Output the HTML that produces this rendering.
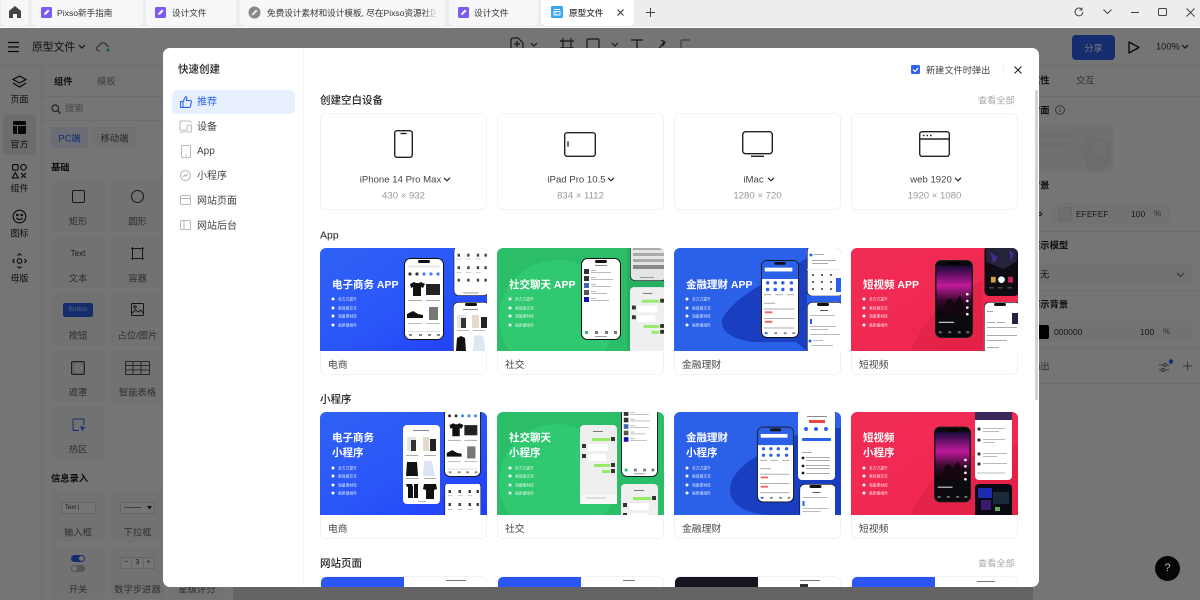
<!DOCTYPE html>
<html lang="zh-CN"><head><meta charset="utf-8"><title>原型文件</title>
<style>
*{box-sizing:border-box}
html,body{margin:0;padding:0;width:1200px;height:600px;overflow:hidden;background:#fff;font-family:"Liberation Sans","Noto Sans CJK SC",sans-serif;color:#222}
body{position:relative;filter:blur(.3px)}
.a{position:absolute}
.t{position:absolute;transform:translateY(calc(-50% + 1px));white-space:nowrap;line-height:1.2}
.c{position:absolute;transform:translate(-50%,calc(-50% + 1px));white-space:nowrap;line-height:1.2;text-align:center}
.l{transform:translate(-50%,-50%)}
.b{font-weight:700}
svg{display:block;overflow:visible}
.tab{position:absolute;top:0;height:26px;background:#f6f7f8;border-radius:0 0 5px 5px}
.tile{position:absolute;width:54px;height:52px;background:#f9f9fb;border-radius:5px}
.lb{font-size:9.3px;color:#666}
.card{position:absolute;width:167px;background:#fff;border:1px solid #f1f2f4;border-radius:6px}
.th{position:absolute;width:167px;height:103px;border-radius:6px 6px 0 0;overflow:hidden}
.hr{position:absolute;height:1px;background:#eeeff1}
.tb{font-size:8.6px;color:#333}
.s{font-size:10px;color:#444}
.h{font-size:10.5px;font-weight:500;color:#222}
.n{font-size:9.8px;color:#444}
.d{font-size:9.6px;color:#444}
.e{font-size:9.6px;color:#999}
</style></head><body>
<svg width="0" height="0" style="position:absolute">
<defs>
<linearGradient id="gb" x1="0" y1="0" x2="1" y2="1"><stop offset="0" stop-color="#2f62f5"/><stop offset=".55" stop-color="#2a55f8"/><stop offset="1" stop-color="#1f3cfa"/></linearGradient>
<linearGradient id="gr" x1="0" y1="0" x2="1" y2="1"><stop offset="0" stop-color="#f02c55"/><stop offset="1" stop-color="#f0264c"/></linearGradient>
<linearGradient id="gv" x1="0" y1="0" x2="0" y2="1"><stop offset="0" stop-color="#1a0a3a"/><stop offset=".4" stop-color="#c01a9a"/><stop offset=".7" stop-color="#3a0a30"/><stop offset="1" stop-color="#050505"/></linearGradient>
<symbol id="ecom" viewBox="0 0 40 82"><rect x=".5" y=".5" width="39" height="81" rx="6" fill="#fff" stroke="#111"/><rect x="14" y="2" width="12" height="3" rx="1.500" fill="#111"/><rect x="4" y="7" width="32" height="3" fill="#eee"/><g fill="#333"><circle cx="6" cy="16" r="1.600"/><circle cx="13" cy="16" r="1.600"/></g><g fill="#3b82f6"><circle cx="20" cy="16" r="1.600"/><circle cx="27" cy="16" r="1.600"/><circle cx="34" cy="16" r="1.600"/></g><path d="M6 26l4-2 2 1 3 0 2-1 4 2-2 4-2-1v9H9v-9l-2 1z" fill="#111"/><rect x="22" y="26" width="14" height="11" fill="#222"/><rect x="4" y="42" width="14" height="1" fill="#aaa"/><rect x="22" y="42" width="14" height="1" fill="#aaa"/><path d="M3 56l6-3 5 3 5 1v3H3z" fill="#111"/><rect x="25" y="49" width="9" height="13" fill="#777"/><rect x="4" y="65" width="14" height="1" fill="#bbb"/><rect x="22" y="65" width="14" height="1" fill="#bbb"/><rect x="4" y="73" width="32" height="1" fill="#ddd"/><g fill="#888"><rect x="5" y="76" width="3" height="2"/><rect x="15" y="76" width="3" height="2"/><rect x="24" y="76" width="3" height="2"/><rect x="33" y="76" width="3" height="2"/></g></symbol>
<symbol id="grid" viewBox="0 0 36 50"><rect x=".3" y="-2" width="36" height="51.500" rx="5" fill="#fff" stroke="#111" stroke-width=".6"/><g fill="#444"><rect x="4" y="6" width="2.500" height="3"/><rect x="14" y="6" width="2.500" height="3"/><rect x="24" y="6" width="2.500" height="3"/><rect x="32" y="6" width="2.500" height="3"/><rect x="4" y="19" width="2.500" height="3"/><rect x="14" y="19" width="2.500" height="3"/><rect x="24" y="19" width="2.500" height="3"/><rect x="32" y="19" width="2.500" height="3"/><rect x="4" y="32" width="2.500" height="3"/><rect x="14" y="32" width="2.500" height="3"/><rect x="24" y="32" width="2.500" height="3"/><rect x="32" y="32" width="2.500" height="3"/></g><g fill="#ccc"><rect x="3" y="11" width="5" height="1"/><rect x="13" y="11" width="5" height="1"/><rect x="23" y="11" width="5" height="1"/><rect x="3" y="25" width="5" height="1"/><rect x="13" y="25" width="5" height="1"/><rect x="23" y="25" width="5" height="1"/></g><rect x="10" y="46" width="16" height="1.500" fill="#bbb"/></symbol>
<symbol id="shop" viewBox="0 0 36 50"><rect x=".3" y=".3" width="36" height="52" rx="5" fill="#fff" stroke="#111" stroke-width=".6"/><rect x="12" y="1" width="12" height="3" rx="1.500" fill="#111"/><rect x="10" y="7" width="15" height="1" fill="#888"/><path d="M4 13h9v13H4z" fill="#e5e5e5"/><path d="M8 16h5v10H8z" fill="#333"/><path d="M19 13h7v13h-7z" fill="#e5d8cc"/><path d="M28 15h6v11h-6z" fill="#222"/><g fill="#bbb"><rect x="4" y="28" width="12" height="1"/><rect x="20" y="28" width="12" height="1"/></g><path d="M4 36l4-2 4 2 1 13H3z" fill="#111"/><path d="M21 34l5-1 5 2 1 14H20z" fill="#dde6f2"/></symbol>
<symbol id="shop2" viewBox="0 0 37 79"><rect width="37" height="79" rx="4" fill="#fff"/><rect x="10" y="5" width="16" height="1" fill="#888"/><path d="M4 12h9v14H4z" fill="#e5e5e5"/><path d="M8 15h5v11H8z" fill="#333"/><path d="M20 12h6v14h-6z" fill="#e5d8cc"/><path d="M27 14h6v12h-6z" fill="#222"/><g fill="#aaa"><rect x="3" y="30" width="12" height="1"/><rect x="21" y="30" width="12" height="1"/></g><path d="M4 37h10l1 14H3z" fill="#111"/><path d="M21 36h8l3 15H20z" fill="#dbe4f0"/><g fill="#aaa"><rect x="3" y="53" width="12" height="1"/><rect x="21" y="53" width="12" height="1"/></g><path d="M3 59h6l1 3v11H5v-11H4zM11 59h4v14h-4z" fill="#111"/><path d="M21 59h12l1 5-3 1v9H23v-9l-3-1z" fill="#111"/><rect x="15" y="76" width="8" height="1" fill="#bbb"/></symbol>
<symbol id="list" viewBox="0 0 40 82"><rect x=".5" y=".5" width="39" height="81" rx="6" fill="#fff" stroke="#111"/><rect x="14" y="2" width="12" height="3" rx="1.500" fill="#111"/><rect x="14" y="7" width="12" height="1" fill="#888"/><g fill="#333"><rect x="3" y="11" width="5" height="5"/><rect x="3" y="18" width="5" height="5"/><rect x="3" y="25" width="5" height="5" fill="#46a"/><rect x="3" y="32" width="5" height="5" fill="#555"/><rect x="3" y="39" width="5" height="5" fill="#11a"/></g><g fill="#bbb"><rect x="10" y="12" width="5" height="1"/><rect x="10" y="14" width="20" height="1"/><rect x="10" y="19" width="5" height="1"/><rect x="10" y="21" width="22" height="1"/><rect x="10" y="26" width="5" height="1"/><rect x="10" y="28" width="20" height="1"/><rect x="10" y="33" width="5" height="1"/><rect x="10" y="35" width="16" height="1"/><rect x="10" y="40" width="5" height="1"/><rect x="10" y="42" width="18" height="1"/></g><rect x="4" y="73" width="3" height="3" fill="#2bbd68"/><g fill="#777"><rect x="14" y="73" width="3" height="3"/><rect x="24" y="73" width="3" height="3"/><rect x="33" y="73" width="3" height="3"/></g><rect x="14" y="78" width="12" height="1" fill="#999"/></symbol>
<symbol id="chat" viewBox="0 0 37 79"><rect width="37" height="79" rx="4" fill="#efefef"/><rect x="13" y="6" width="10" height="1" fill="#777"/><rect x="12" y="13" width="18" height="3" fill="#95ec69"/><rect x="31" y="12" width="4" height="4" fill="#333"/><rect x="2" y="19" width="4" height="4" fill="#333"/><rect x="8" y="19" width="20" height="7" fill="#fff"/><rect x="2" y="29" width="4" height="4" fill="#333"/><rect x="8" y="29" width="18" height="7" fill="#fff"/><rect x="14" y="39" width="16" height="3" fill="#95ec69"/><rect x="31" y="38" width="4" height="4" fill="#333"/><rect x="22" y="45" width="8" height="3" fill="#95ec69"/><rect x="31" y="44" width="4" height="4" fill="#333"/><rect y="70" width="37" height="9" fill="#f8f8f8"/><rect x="6" y="72" width="20" height="2" fill="#ddd"/></symbol>
<symbol id="kbd" viewBox="0 0 34 48"><rect x=".3" y=".3" width="36" height="47.400" rx="5" fill="#e4e5e7" stroke="#111" stroke-width=".7"/><g fill="#aaa"><path d="M3 14h31v3H3zM3 20h31v3H3zM3 26h31v3H3z"/></g><path d="M3 32h31v4H3z" fill="#888"/><rect x="10" y="44" width="14" height="1" fill="#999"/></symbol>
<symbol id="fin" viewBox="0 0 40 82"><rect x=".5" y=".5" width="39" height="81" rx="6" fill="#fff" stroke="#111"/><path d="M1 6a5 5 0 0 1 5-5h28a5 5 0 0 1 5 5v14H1z" fill="#2b60e8"/><rect x="14" y="2" width="12" height="3" rx="1.500" fill="#111"/><rect x="4" y="8" width="29" height="4" fill="#fff"/><g fill="#2b60e8"><circle cx="7" cy="24" r="1.800"/><circle cx="15" cy="24" r="1.800"/><circle cx="23" cy="24" r="1.800"/><circle cx="32" cy="24" r="1.800"/><circle cx="7" cy="31" r="1.800"/><circle cx="15" cy="31" r="1.800"/><circle cx="23" cy="31" r="1.800"/><circle cx="32" cy="31" r="1.800"/></g><g fill="#aaa"><rect x="3" y="36" width="8" height="1"/><rect x="15" y="36" width="8" height="1"/><rect x="27" y="36" width="8" height="1"/><rect x="3" y="45" width="12" height="1"/><rect x="3" y="51" width="32" height="1"/><rect x="3" y="61" width="32" height="1"/><rect x="3" y="71" width="32" height="1"/></g><g fill="#e66"><rect x="4" y="54" width="8" height="2"/><rect x="4" y="64" width="8" height="2"/></g><rect x="4" y="76" width="3" height="2" fill="#2b60e8"/><g fill="#888"><rect x="14" y="76" width="3" height="2"/><rect x="24" y="76" width="3" height="2"/><rect x="33" y="76" width="3" height="2"/></g></symbol>
<symbol id="keypad" viewBox="0 0 34 48"><rect x=".3" y="-2" width="36" height="50" rx="5" fill="#fff" stroke="#111" stroke-width=".6"/><circle cx="4" cy="7" r="1.500" fill="#2b60e8"/><g fill="#aaa"><rect x="7" y="6" width="10" height="1"/><rect x="5" y="12" width="24" height="1"/><rect x="5" y="15" width="16" height="1"/></g><g fill="#666"><rect x="5" y="26" width="2" height="2"/><rect x="14" y="26" width="2" height="2"/><rect x="23" y="26" width="2" height="2"/><rect x="5" y="33" width="2" height="2"/><rect x="14" y="33" width="2" height="2"/><rect x="23" y="33" width="2" height="2"/><rect x="5" y="40" width="2" height="2"/><rect x="14" y="40" width="2" height="2"/><rect x="23" y="40" width="2" height="2"/></g><rect x="29" y="30" width="6" height="14" fill="#2b60e8"/><rect x="0" y="21" width="34" height="1" fill="#eee"/></symbol>
<symbol id="pay" viewBox="0 0 34 50"><rect x=".3" y=".3" width="36" height="52" rx="5" fill="#fff" stroke="#111" stroke-width=".6"/><rect x="10" y="1" width="12" height="3" rx="1.500" fill="#111"/><rect x="13" y="8" width="8" height="1" fill="#555"/><g fill="#bbb"><rect x="3" y="13" width="25" height="1"/><rect x="3" y="24" width="26" height="1"/><rect x="3" y="27" width="18" height="1"/><rect x="3" y="32" width="30" height="1"/><rect x="6" y="38" width="10" height="1"/><rect x="4" y="43" width="22" height="1"/></g><rect x="3" y="17" width="2" height="5" fill="#2b60e8"/><circle cx="3" cy="39" r="1.500" fill="#2b60e8"/></symbol>
<symbol id="vid" viewBox="0 0 40 82"><rect x=".5" y=".5" width="39" height="81" rx="6" fill="#0b0b0f" stroke="#222"/><rect x="1.500" y="6" width="37" height="52" fill="url(#gv)"/><path d="M8 58l3-14 5-4 4 6 6-8 4 8 4-2v14z" fill="#15060f"/><rect x="14" y="2" width="12" height="3" rx="1.500" fill="#000"/><g fill="#fff"><circle cx="34" cy="36" r="1.400"/><circle cx="34" cy="43" r="1.400"/><circle cx="34" cy="50" r="1.400"/><circle cx="34" cy="57" r="1.400"/><rect x="4" y="65" width="16" height="1"/></g><g fill="#777"><rect x="4" y="75" width="3" height="2"/><rect x="14" y="75" width="3" height="2"/><rect x="24" y="75" width="3" height="2"/><rect x="33" y="75" width="3" height="2"/></g></symbol>
<symbol id="vid2" viewBox="0 0 34 50"><rect x=".3" y="-2" width="36" height="52" rx="5" fill="#0c0c12"/><path d="M2 0h32v14L20 22 2 14z" fill="#23233a"/><path d="M6 4l8 6-4 6zM26 2l5 4-3 8z" fill="#4a2a90"/><circle cx="18" cy="33" r="3.500" fill="#fff"/><rect x="7" y="30" width="5" height="6" fill="#d8a040"/><rect x="25" y="30" width="5" height="6" fill="#d02060"/><g fill="#666"><rect x="5" y="41" width="5" height="1"/><rect x="14" y="41" width="5" height="1"/><rect x="24" y="41" width="5" height="1"/></g></symbol>
<symbol id="vid3" viewBox="0 0 37 31"><rect width="37" height="34" rx="4" fill="#0a0a14"/><path d="M3 4h14v10H3z" fill="#1c2cb0"/><path d="M18 8h16v12H18z" fill="#1a2a3a"/><path d="M6 16h10v10H6z" fill="#3a1a70"/><rect x="20" y="23" width="5" height="4" fill="#6a6"/></symbol>
<symbol id="prof" viewBox="0 0 34 50"><rect x=".3" y=".3" width="36" height="52" rx="5" fill="#fff" stroke="#111" stroke-width=".6"/><rect x="10" y="1" width="12" height="3" rx="1.500" fill="#111"/><rect x="28" y="11" width="6" height="11" fill="#224"/><g fill="#aaa"><rect x="3" y="9" width="6" height="1"/><rect x="3" y="20" width="8" height="1"/><rect x="13" y="20" width="8" height="1"/><rect x="3" y="25" width="30" height="1"/><rect x="3" y="33" width="30" height="1"/><rect x="3" y="38" width="20" height="1"/><rect x="3" y="45" width="12" height="1"/></g></symbol>
<symbol id="fin2" viewBox="0 0 37 70"><rect width="37" height="70" rx="4" fill="#fff"/><rect x="9" y="6" width="20" height="1" fill="#888"/><rect x="11" y="10" width="16" height="3" fill="#e44"/><g fill="#2b60e8"><circle cx="8" cy="19" r="2"/><circle cx="18" cy="19" r="2"/><circle cx="28" cy="19" r="2"/></g><rect x="4" y="28" width="29" height="3" rx="1" fill="#2b60e8"/><g fill="#aaa"><rect x="4" y="42" width="10" height="1"/><rect x="8" y="47" width="24" height="1"/><rect x="8" y="50" width="24" height="1"/><rect x="8" y="55" width="24" height="1"/><rect x="8" y="58" width="24" height="1"/><rect x="8" y="63" width="24" height="1"/></g><g fill="#113"><circle cx="5" cy="48" r="1.400"/><circle cx="5" cy="56" r="1.400"/><circle cx="5" cy="63" r="1.400"/></g></symbol>
<symbol id="cmt" viewBox="0 0 37 68"><rect width="37" height="68" rx="4" fill="#fff"/><path d="M0 0h37v8H0z" fill="#3a2a5a"/><g fill="#333"><circle cx="4" cy="17" r="1.600"/><circle cx="4" cy="28" r="1.600"/><circle cx="4" cy="42" r="1.600"/><circle cx="4" cy="52" r="1.600"/></g><g fill="#bbb"><rect x="8" y="16" width="22" height="1"/><rect x="8" y="19" width="16" height="1"/><rect x="8" y="27" width="22" height="1"/><rect x="8" y="30" width="12" height="1"/><rect x="8" y="41" width="24" height="1"/><rect x="8" y="44" width="14" height="1"/><rect x="8" y="51" width="24" height="1"/></g><rect x="2" y="60" width="28" height="2" fill="#ddd"/></symbol>
</defs></svg>

<!-- APP UNDERLAY -->
<div class="a" style="left:0;top:28px;width:1200px;height:572px;background:#fff">
<div class="a" style="left:233px;top:37px;width:800px;height:535px;background:#d9dadc"></div>
</div>
<div class="hr" style="left:0;top:65px;width:1200px"></div>
<div class="a" style="left:41px;top:65px;width:1px;height:535px;background:#f0f0f2"></div>
<div class="a" style="left:233px;top:65px;width:1px;height:535px;background:#e2e3e5"></div>

<svg class="a" style="left:8px;top:41px" width="12" height="12" viewBox="0 0 12 12"><path d="M0 1.500h11M0 6h11M0 10.500h11" stroke="#111" stroke-width="1.200"/></svg>
<span class="t" style="left:32px;top:47px;font-size:10.800px;color:#222">原型文件</span>
<svg class="a" style="left:78px;top:44px" width="8" height="6"><path d="M1 1l3 3 3-3" fill="none" stroke="#222" stroke-width="1.200"/></svg>
<svg class="a" style="left:96px;top:41px" width="15" height="12" viewBox="0 0 15 12"><path d="M4 10H3a2.500 2.500 0 0 1 0-5 4 4 0 0 1 7.500-1A3 3 0 0 1 12.500 6" fill="none" stroke="#555"/><circle cx="12" cy="9" r="1.500" fill="#35c759"/></svg>

<svg class="a" style="left:505px;top:36px" width="185" height="14" viewBox="0 0 185 14" fill="none" stroke="#333" stroke-width="1.200"><path d="M6 13V4a2 2 0 0 1 2-2h5l5 5v6M9 8h6M12 5v6"/><path d="M26 7l3 3 3-3"/><path d="M58 2v12M66 2v12M55 5h14M55 12h14"/><rect x="82" y="3" width="12" height="11" rx="1"/><path d="M107 7l3 3 3-3"/><path d="M126 4h12M132 4v10"/><path d="M153 14l6-8M156 4l4 2-2 4"/><path d="M176 4h9M176 4v9" stroke="#888"/></svg>

<div class="a" style="left:1072px;top:35px;width:43px;height:25px;background:#2e62f0;border-radius:4px"></div>
<span class="c" style="left:1093.500px;top:47.500px;font-size:9.300px;color:#fff">分享</span>
<svg class="a" style="left:1127px;top:40px" width="14" height="15" viewBox="0 0 14 15"><path d="M2 2l10 5.500L2 13z" fill="none" stroke="#111" stroke-width="1.300" stroke-linejoin="round"/></svg>
<span class="t" style="left:1156px;top:46px;font-size:9.300px;color:#333">100%</span>
<svg class="a" style="left:1181px;top:44px" width="8" height="6"><path d="M1 1l3 3 3-3" fill="none" stroke="#222" stroke-width="1.200"/></svg>

<!-- left nav -->
<svg class="a" style="left:11px;top:75px" width="17" height="14" viewBox="0 0 17 14" fill="none" stroke="#111" stroke-width="1.200"><path d="M8.500 1l6.500 3.500-6.500 3.500L2 4.500z"/><path d="M2 8l6.500 4L15 8"/></svg>
<span class="c" style="left:19.500px;top:99px;font-size:9px">页面</span>
<div class="a" style="left:3px;top:115px;width:33px;height:40px;background:#ececee;border-radius:4px"></div>
<svg class="a" style="left:13px;top:121px" width="13" height="13" viewBox="0 0 13 13"><path d="M0 1.500A1.500 1.500 0 0 1 1.500 0h10A1.500 1.500 0 0 1 13 1.500V4H0zM0 5h4v8H1.500A1.500 1.500 0 0 1 0 11.500zM5 5h8v6.500a1.500 1.500 0 0 1-1.500 1.500H5z" fill="#111"/></svg>
<span class="c" style="left:19.500px;top:144px;font-size:9px">官方</span>
<svg class="a" style="left:12px;top:164px" width="15" height="15" viewBox="0 0 15 15" fill="none" stroke="#111" stroke-width="1.100"><rect x=".6" y=".6" width="5.500" height="5.500" rx="1"/><circle cx="11.500" cy="3.300" r="2.800"/><path d="M3.300 8.500l3 5.500h-6z"/><path d="M9 9l5 5M14 9l-5 5"/></svg>
<span class="c" style="left:19.500px;top:188px;font-size:9px">组件</span>
<svg class="a" style="left:12px;top:209px" width="15" height="15" viewBox="0 0 15 15" fill="none" stroke="#111" stroke-width="1.100"><circle cx="7.500" cy="7.500" r="6.300"/><circle cx="5.300" cy="6" r=".7" fill="#111"/><circle cx="9.700" cy="6" r=".7" fill="#111"/><path d="M4.500 9c1.500 2 4.500 2 6 0"/></svg>
<span class="c" style="left:19.500px;top:233px;font-size:9px">图标</span>
<svg class="a" style="left:12px;top:253px" width="15" height="16" viewBox="0 0 15 16" fill="none" stroke="#111" stroke-width="1.100"><path d="M5.500 2.500L7.500.8l2 1.700M5.500 13.500l2 1.700 2-1.700M2.500 6L.8 8l1.700 2M12.500 6L14.200 8l-1.700 2"/><circle cx="7.500" cy="8" r="2.300"/></svg>
<span class="c" style="left:19.500px;top:278px;font-size:9px">母版</span>

<!-- left panel -->
<span class="t b" style="left:54px;top:81px;font-size:9.300px">组件</span>
<span class="t" style="left:97px;top:81px;font-size:9.300px;color:#888">模板</span>
<div class="hr" style="left:41px;top:96px;width:192px"></div>
<svg class="a" style="left:51px;top:104px" width="10" height="10" viewBox="0 0 10 10" fill="none" stroke="#333" stroke-width="1.100"><circle cx="4.200" cy="4.200" r="3.300"/><path d="M6.700 6.700L9.500 9.500"/></svg>
<span class="t" style="left:65px;top:108px;font-size:9.300px;color:#999">搜索</span>
<div class="hr" style="left:41px;top:120px;width:192px"></div>
<div class="a" style="left:51px;top:127px;width:37px;height:21px;background:#e8effd;border-radius:3px"></div>
<span class="c" style="left:69.500px;top:137.500px;font-size:9.300px;color:#2e62f0">PC端</span>
<div class="a" style="left:93px;top:127px;width:43px;height:21px;background:#f6f7f8;border-radius:3px"></div>
<span class="c" style="left:114.500px;top:137.500px;font-size:9.300px;color:#555">移动端</span>
<span class="t b" style="left:51px;top:167px;font-size:9.300px">基础</span>

<div class="tile" style="left:51px;top:180px"></div><div class="tile" style="left:110px;top:180px"></div>
<div class="tile" style="left:51px;top:236px"></div><div class="tile" style="left:110px;top:236px"></div>
<div class="tile" style="left:51px;top:293px"></div><div class="tile" style="left:110px;top:293px"></div>
<div class="tile" style="left:51px;top:350px"></div><div class="tile" style="left:110px;top:350px"></div>
<div class="tile" style="left:51px;top:407px"></div>
<div class="tile" style="left:51px;top:490px"></div><div class="tile" style="left:110px;top:490px"></div>
<div class="tile" style="left:51px;top:547px"></div><div class="tile" style="left:110px;top:547px"></div><div class="tile" style="left:169px;top:547px"></div>
<div class="a" style="left:72px;top:190px;width:13px;height:13px;border:1px solid #333;border-radius:2px"></div>
<div class="a" style="left:131px;top:190px;width:13px;height:13px;border:1px solid #333;border-radius:50%"></div>
<span class="c lb" style="left:78px;top:221px">矩形</span><span class="c lb" style="left:137.500px;top:221px">圆形</span>
<span class="c" style="left:78px;top:253px;font-size:8px;color:#333">Text</span>
<svg class="a" style="left:131px;top:247px" width="13" height="13" viewBox="0 0 13 13" fill="none" stroke="#333"><path d="M0 1.500h13M0 11.500h13M1.500 0v13M11.500 0v13"/></svg>
<span class="c lb" style="left:78px;top:278px">文本</span><span class="c lb" style="left:137.500px;top:278px">容器</span>
<div class="a" style="left:63px;top:303px;width:30px;height:14px;background:#2e62f0;border-radius:2px;color:#c8d6fb;font-size:6.500px;line-height:14px;text-align:center">Button</div>
<svg class="a" style="left:131px;top:303px" width="13" height="13" viewBox="0 0 13 13" fill="none" stroke="#333"><rect x=".5" y=".5" width="12" height="12" rx="1"/><circle cx="4" cy="4" r="1.200"/><path d="M1 10l3.500-3 3 2 2-2 3 3"/></svg>
<span class="c lb" style="left:78px;top:335px">按钮</span><span class="c lb" style="left:137.500px;top:335px">占位/图片</span>
<svg class="a" style="left:71px;top:361px" width="14" height="14" viewBox="0 0 14 14"><rect x=".6" y=".6" width="12.800" height="12.800" rx="1" fill="#ddd" stroke="#333"/><circle cx="7" cy="7" r="4.500" fill="#f5f5f5"/></svg>
<svg class="a" style="left:125px;top:361px" width="25" height="14" viewBox="0 0 25 14" fill="none" stroke="#333" stroke-width=".8"><rect x=".5" y=".5" width="24" height="13"/><path d="M0 4.500h25M0 9h25M8 0v14M16 0v14"/></svg>
<span class="c lb" style="left:78px;top:392px">遮罩</span><span class="c lb" style="left:137.500px;top:392px">智能表格</span>
<svg class="a" style="left:72px;top:418px" width="14" height="14" viewBox="0 0 14 14"><path d="M7 12.500H2a1 1 0 0 1-1-1V2a1 1 0 0 1 1-1h9a1 1 0 0 1 1 1v5" fill="none" stroke="#2e62f0"/><path d="M8 8l6 1.500-2.500 1-1 3z" fill="#2e62f0"/></svg>
<span class="c lb" style="left:78px;top:449px">热区</span>
<span class="t b" style="left:51px;top:478px;font-size:9.300px">信息录入</span>
<div class="a" style="left:61px;top:502px;width:35px;height:12px;border:1px solid #ddd;background:#fff;font-size:6px;line-height:10px;padding-left:3px;color:#333">Text |</div>
<div class="a" style="left:120px;top:502px;width:35px;height:12px;border:1px solid #ddd;background:#fff"></div>
<div class="a" style="left:124px;top:507px;width:17px;height:1px;background:#888"></div>
<svg class="a" style="left:147px;top:506px" width="5" height="4"><path d="M0 0h5L2.500 3.500z" fill="#222"/></svg>
<span class="c lb" style="left:78px;top:532px">输入框</span><span class="c lb" style="left:137.500px;top:532px">下拉框</span>
<div class="a" style="left:71px;top:555px;width:14px;height:7px;background:#2e62f0;border-radius:4px"></div><div class="a" style="left:79px;top:556px;width:5px;height:5px;background:#fff;border-radius:50%"></div>
<div class="a" style="left:71px;top:565px;width:14px;height:7px;background:#bbb;border-radius:4px"></div><div class="a" style="left:72px;top:566px;width:5px;height:5px;background:#fff;border-radius:50%"></div>
<div class="a" style="left:120px;top:557px;width:35px;height:12px;border:1px solid #ddd;background:#fff;font-size:7px;line-height:10px;color:#333;display:flex;text-align:center"><span style="flex:1;border-right:1px solid #ddd">−</span><span style="flex:1;border-right:1px solid #ddd">3</span><span style="flex:1">+</span></div>
<span class="c lb" style="left:78px;top:589px">开关</span><span class="c lb" style="left:137.500px;top:589px">数字步进器</span><span class="c lb" style="left:197px;top:589px">星级评分</span>

<!-- right panel -->
<div class="a" style="left:1033px;top:66px;width:167px;height:534px;background:#fff"></div>
<span class="t b" style="left:1031px;top:80px;font-size:9.300px">属性</span>
<span class="t" style="left:1076px;top:80px;font-size:9.300px;color:#666">交互</span>
<div class="hr" style="left:1033px;top:96px;width:167px"></div>
<span class="t b" style="left:1031px;top:110px;font-size:9.300px">封面</span>
<svg class="a" style="left:1055px;top:105px" width="10" height="10" viewBox="0 0 10 10" fill="none" stroke="#555" stroke-width=".8"><circle cx="5" cy="5" r="4.400"/><path d="M5 4.300v3M5 2.500v1"/></svg>
<div class="a" style="left:1033px;top:124px;width:80px;height:48px;background:#f5f5f6;border-radius:4px"></div>
<svg class="a" style="left:1033px;top:124px" width="80" height="48"><g fill="#ececee"><rect x="6" y="8" width="34" height="6"/><rect x="6" y="18" width="30" height="4"/><path d="M46 24l12-12 20 6v20l-10 8-14 0v-8z"/></g><circle cx="66" cy="24" r="7" fill="#f5f5f6"/></svg>
<span class="t b" style="left:1031px;top:185px;font-size:9.300px">背景</span>
<div class="a" style="left:1053px;top:203px;width:117px;height:21px;background:#f7f8fa;border-radius:3px"></div>
<svg class="a" style="left:1037px;top:210px" width="6" height="8"><path d="M1 4l2-2 2 2-2 2z" fill="none" stroke="#333"/></svg>
<div class="a" style="left:1058px;top:207px;width:14px;height:14px;background:#efefef;border:1px solid #e4e4e4;border-radius:2px"></div>
<span class="t" style="left:1076px;top:213px;font-size:8.500px;color:#333">EFEFEF</span>
<span class="t" style="left:1131px;top:213px;font-size:8.500px;color:#333">100</span>
<span class="t" style="left:1154px;top:213px;font-size:8px;color:#666">%</span>
<div class="hr" style="left:1033px;top:231px;width:167px"></div>
<span class="t b" style="left:1031px;top:245px;font-size:9.300px">演示模型</span>
<div class="a" style="left:1033px;top:263px;width:159px;height:21px;background:#f7f8fa;border-radius:3px"></div>
<span class="t" style="left:1040px;top:274px;font-size:9.300px;color:#333">无</span>
<svg class="a" style="left:1176px;top:272px" width="9" height="6"><path d="M1 1l3.500 3.500L8 1" fill="none" stroke="#666"/></svg>
<div class="hr" style="left:1033px;top:290px;width:167px"></div>
<span class="t b" style="left:1031px;top:304px;font-size:9.300px">演示背景</span>
<div class="a" style="left:1033px;top:321px;width:159px;height:21px;background:#f7f8fa;border-radius:3px"></div>
<div class="a" style="left:1035px;top:325px;width:14px;height:14px;background:#000;border-radius:2px"></div>
<span class="t" style="left:1054px;top:331px;font-size:8.500px;color:#333">000000</span>
<span class="t" style="left:1140px;top:331px;font-size:8.500px;color:#333">100</span>
<span class="t" style="left:1163px;top:331px;font-size:8px;color:#666">%</span>
<div class="hr" style="left:1033px;top:348px;width:167px"></div>
<span class="t" style="left:1031px;top:366px;font-size:9.300px;color:#666">输出</span>
<svg class="a" style="left:1159px;top:359px" width="36" height="14" fill="none" stroke="#777"><path d="M0 6h10M0 11h10"/><circle cx="6" cy="6" r="1.500" fill="#fff"/><circle cx="4" cy="11" r="1.500" fill="#fff"/><circle cx="12" cy="2.500" r="2.200" fill="#2e62f0" stroke="none"/><path d="M24 7h9M28.500 3v8"/></svg>
<div class="hr" style="left:1033px;top:383px;width:167px"></div>

<!-- overlay -->
<div class="a" style="left:0;top:28px;width:1200px;height:572px;background:rgba(0,0,0,.54)"></div>

<!-- TAB BAR -->
<div class="a" style="left:0;top:0;width:1200px;height:27px;background:#ecedef"></div>
<div class="a" style="left:0;top:27px;width:1200px;height:1px;background:#fff"></div>
<div class="tab" style="left:1px;width:27px"></div>
<svg class="a" style="left:9px;top:6px" width="12" height="12" viewBox="0 0 12 12"><path d="M6 0L0 5v7h4V8h4v4h4V5z" fill="#444"/></svg>
<div class="tab" style="left:32px;width:111px"></div>
<div class="tab" style="left:146px;width:90px"></div>
<div class="tab" style="left:240px;width:205px"></div>
<div class="tab" style="left:449px;width:89px"></div>
<div class="tab" style="left:541px;width:93px;background:#fff"></div>
<svg class="a" style="left:41px;top:7px" width="11" height="11" viewBox="0 0 11 11"><rect width="11" height="11" rx="1.500" fill="#7a5cf5"/><path d="M3 8l.5-2L7 2.500 8.500 4 5 7.500z" fill="#fff"/></svg>
<span class="t tb" style="left:57px;top:11.500px">Pixso新手指南</span>
<svg class="a" style="left:155px;top:7px" width="11" height="11" viewBox="0 0 11 11"><rect width="11" height="11" rx="1.500" fill="#7a5cf5"/><path d="M3 8l.5-2L7 2.500 8.500 4 5 7.500z" fill="#fff"/></svg>
<span class="t tb" style="left:172px;top:11.500px">设计文件</span>
<svg class="a" style="left:248px;top:6px" width="13" height="13" viewBox="0 0 13 13"><circle cx="6.500" cy="6.500" r="6" fill="#888"/><path d="M3.500 8.500L8 3.500l1.500 1.500-4.500 4.500z" fill="#eee"/></svg>
<span class="t tb" style="left:267px;top:11.500px;width:170px;overflow:hidden;-webkit-mask-image:linear-gradient(90deg,#000 92%,transparent)">免费设计素材和设计模板, 尽在Pixso资源社区</span>
<svg class="a" style="left:458px;top:7px" width="11" height="11" viewBox="0 0 11 11"><rect width="11" height="11" rx="1.500" fill="#7a5cf5"/><path d="M3 8l.5-2L7 2.500 8.500 4 5 7.500z" fill="#fff"/></svg>
<span class="t tb" style="left:474px;top:11.500px">设计文件</span>
<svg class="a" style="left:551px;top:6px" width="12" height="12" viewBox="0 0 12 12"><rect width="12" height="12" rx="1.500" fill="#39a7f5"/><path d="M3 3.500h6M3 5.500h6v3.500H3zM5 5.500v3.500" fill="none" stroke="#fff" stroke-width=".9"/></svg>
<span class="t tb" style="left:569px;top:11.500px;font-weight:500">原型文件</span>
<svg class="a" style="left:617px;top:9px" width="7" height="7"><path d="M.5.5l6 6M6.500.5l-6 6" stroke="#333"/></svg>
<svg class="a" style="left:646px;top:7.500px" width="9" height="9"><path d="M4.500 0v9M0 4.500h9" stroke="#444"/></svg>
<svg class="a" style="left:1074px;top:7px" width="10" height="10" viewBox="0 0 10 10" fill="none" stroke="#444"><path d="M8.800 5A3.900 3.900 0 1 1 7.500 2"/><path d="M8 .5V3H5.500" stroke-width=".9"/></svg>
<svg class="a" style="left:1103px;top:9px" width="9" height="6"><path d="M.5.5l4 4 4-4" fill="none" stroke="#444"/></svg>
<div class="a" style="left:1131px;top:11.500px;width:8px;height:1px;background:#444"></div>
<div class="a" style="left:1158px;top:8px;width:9px;height:8px;border:1px solid #444;border-radius:1.500px"></div>
<svg class="a" style="left:1186px;top:8px" width="9" height="9"><path d="M.5.5l8 8M8.500.5l-8 8" stroke="#444"/></svg>

<!-- MODAL -->
<div class="a" style="left:163px;top:48px;width:876px;height:539px;background:#fff;border-radius:7px;overflow:hidden">
<div class="a" style="left:140px;top:0;width:1px;height:539px;background:#f3f4f6"></div>
</div>
<span class="t h" style="left:178px;top:69px">快速创建</span>
<div class="a" style="left:172px;top:90px;width:123px;height:24px;background:#e7effd;border-radius:5px"></div>
<svg class="a" style="left:180px;top:96px" width="12" height="12" viewBox="0 0 12 12" fill="none" stroke="#2e62f0" stroke-width="1.100"><path d="M.6 5.500h2.400v6H.6zM3 5.500L5.500.8c1 0 1.500.7 1.300 1.700L6.400 4.500h4a1 1 0 0 1 1 1.200l-1 4.800a1 1 0 0 1-1 .9H3"/></svg>
<span class="t" style="left:197px;top:101.500px;font-size:10px;color:#2e62f0">推荐</span>
<svg class="a" style="left:179px;top:120px" width="13" height="13" viewBox="0 0 13 13" fill="none" stroke="#bbb"><path d="M12 3V2a1 1 0 0 0-1-1H2a1 1 0 0 0-1 1v7a1 1 0 0 0 1 1h5"/><rect x="8" y="5" width="4.500" height="7" rx="1"/><path d="M1 12h6"/></svg>
<span class="t s" style="left:197px;top:126.500px">设备</span>
<svg class="a" style="left:181px;top:145px" width="10" height="13" viewBox="0 0 10 13" fill="none" stroke="#bbb"><rect x=".5" y=".5" width="9" height="12" rx="1"/><path d="M4.500 10h1" stroke="#777"/></svg>
<span class="t s" style="left:197px;top:151px">App</span>
<svg class="a" style="left:180px;top:170px" width="11" height="11" viewBox="0 0 11 11" fill="none" stroke="#bbb"><circle cx="5.500" cy="5.500" r="5"/><path d="M3 7l1.500-1.500c.8-.8 2-.8 2.500 0M8 4L6.500 5.500c-.8.800-2 .8-2.500 0"/></svg>
<span class="t s" style="left:197px;top:175.500px">小程序</span>
<svg class="a" style="left:180px;top:195px" width="11" height="10" viewBox="0 0 11 10" fill="none" stroke="#bbb"><rect x=".5" y=".5" width="10" height="9" rx="1"/><path d="M.5 3.500h10"/></svg>
<span class="t s" style="left:197px;top:200.500px">网站页面</span>
<svg class="a" style="left:180px;top:220px" width="11" height="10" viewBox="0 0 11 10" fill="none" stroke="#bbb"><rect x=".5" y=".5" width="10" height="9" rx="1"/><path d="M4 .5v9"/></svg>
<span class="t s" style="left:197px;top:225.500px">网站后台</span>

<!-- modal top right -->
<div class="a" style="left:911px;top:65px;width:9px;height:9px;background:#2e62f0;border-radius:1.500px"></div>
<svg class="a" style="left:911px;top:65px" width="9" height="9"><path d="M2 4.500l2 2 3.200-3.500" fill="none" stroke="#fff" stroke-width="1.200"/></svg>
<span class="t" style="left:926px;top:69.500px;font-size:9.200px;color:#444">新建文件时弹出</span>
<div class="a" style="left:1003px;top:66px;width:1px;height:8px;background:#eee"></div>
<svg class="a" style="left:1014px;top:66px" width="8" height="8"><path d="M.5.500l7 7M7.500.500l-7 7" stroke="#222" stroke-width="1.100"/></svg>
<div class="a" style="left:1035px;top:90px;width:3px;height:310px;background:#d4d4d6;border-radius:2px"></div>

<!-- device section -->
<span class="t h" style="left:320px;top:100px">创建空白设备</span>
<span class="t" style="left:978px;top:100px;font-size:9.200px;color:#aaa">查看全部</span>
<div class="card" style="left:320px;top:113px;height:97px"></div>
<div class="card" style="left:497px;top:113px;height:97px"></div>
<div class="card" style="left:674px;top:113px;height:97px"></div>
<div class="card" style="left:851px;top:113px;height:97px"></div>
<svg class="a" style="left:394px;top:130px" width="19" height="28" viewBox="0 0 19 28" fill="none" stroke="#222" stroke-width="1.400"><rect x=".7" y=".7" width="17.600" height="26.600" rx="2.500"/><path d="M6.500 3.500h6"/></svg>
<svg class="a" style="left:564px;top:132px" width="32" height="25" viewBox="0 0 32 25" fill="none" stroke="#222" stroke-width="1.400"><rect x=".7" y=".7" width="30.600" height="23.600" rx="2.500"/><path d="M4 9.500v5"/></svg>
<svg class="a" style="left:742px;top:131px" width="31" height="26" viewBox="0 0 31 26" fill="none" stroke="#222" stroke-width="1.400"><rect x=".7" y=".7" width="29.600" height="22" rx="3"/><path d="M9 25.300h13"/></svg>
<svg class="a" style="left:919px;top:131px" width="31" height="26" viewBox="0 0 31 26" fill="none" stroke="#222" stroke-width="1.400"><rect x=".7" y=".7" width="29.600" height="24.600" rx="2.500"/><path d="M.7 8h29.600"/><path d="M4 4.500h1.500M7.500 4.500H9M11 4.500h1.500" stroke-width="1.500"/></svg>
<span class="c l d" style="left:400.500px;top:179.500px">iPhone 14 Pro Max</span>
<svg class="a" style="left:443px;top:177px" width="8" height="5"><path d="M1 .8l3 3 3-3" fill="none" stroke="#222" stroke-width="1.100"/></svg>
<span class="c l d" style="left:576.500px;top:179.500px">iPad Pro 10.5</span>
<svg class="a" style="left:607px;top:177px" width="8" height="5"><path d="M1 .8l3 3 3-3" fill="none" stroke="#222" stroke-width="1.100"/></svg>
<span class="c l d" style="left:753.500px;top:179.500px">iMac</span>
<svg class="a" style="left:767px;top:177px" width="8" height="5"><path d="M1 .8l3 3 3-3" fill="none" stroke="#222" stroke-width="1.100"/></svg>
<span class="c l d" style="left:931px;top:179.500px">web 1920</span>
<svg class="a" style="left:954px;top:177px" width="8" height="5"><path d="M1 .8l3 3 3-3" fill="none" stroke="#222" stroke-width="1.100"/></svg>
<span class="c l e" style="left:403.500px;top:195.500px">430 × 932</span>
<span class="c l e" style="left:580.500px;top:195.500px">834 × 1112</span>
<span class="c l e" style="left:757.500px;top:195.500px">1280 × 720</span>
<span class="c l e" style="left:934.500px;top:195.500px">1920 × 1080</span>

<!-- App section -->
<span class="t h" style="left:320px;top:234.500px">App</span>
<div class="card" style="left:320px;top:248px;height:127px"></div>
<div class="card" style="left:497px;top:248px;height:127px"></div>
<div class="card" style="left:674px;top:248px;height:127px"></div>
<div class="card" style="left:851px;top:248px;height:127px"></div>

<div class="th" style="top:248px;left:320px"><svg width="167" height="103" viewBox="0 0 167 103" font-family="Liberation Sans,Noto Sans CJK SC,sans-serif"><rect width="167" height="103" fill="url(#gb)"/><use href="#grid" x="133" y="0" width="36" height="48"/><use href="#ecom" x="84" y="10" width="40" height="82"/><use href="#shop" x="133" y="54" width="36" height="50"/><text x="12" y="40" font-size="10.500" font-weight="700" fill="#fff">电子商务 APP</text><g fill="#fff"><circle cx="13" cy="51" r="1.500"/><circle cx="13" cy="60" r="1.500"/><circle cx="13" cy="68" r="1.500"/><circle cx="13" cy="77" r="1.500"/></g><g fill="#dbe4ff" font-size="3.800"><text x="18" y="52.500">全方式提升</text><text x="18" y="61.500">高保真交互</text><text x="18" y="69.500">海量素材库</text><text x="18" y="78.500">高质量组件</text></g></svg></div>

<div class="th" style="top:248px;left:497px"><svg width="167" height="103" viewBox="0 0 167 103" font-family="Liberation Sans,Noto Sans CJK SC,sans-serif"><rect width="167" height="103" fill="#2bbd68"/><circle cx="60" cy="70" r="58" fill="#31c872"/><path d="M130 0h37v103h-37z" fill="#1fa35a" opacity=".5"/><use href="#list" x="84" y="10" width="40" height="82"/><use href="#kbd" x="133" y="-15" width="34" height="48"/><use href="#chat" x="133" y="39" width="36" height="77"/><text x="12" y="40" font-size="10.500" font-weight="700" fill="#fff">社交聊天 APP</text><g fill="#fff"><circle cx="13" cy="51" r="1.500"/><circle cx="13" cy="60" r="1.500"/><circle cx="13" cy="68" r="1.500"/><circle cx="13" cy="77" r="1.500"/></g><g fill="#dcf7e6" font-size="3.800"><text x="18" y="52.500">全方式提升</text><text x="18" y="61.500">高保真交互</text><text x="18" y="69.500">海量素材库</text><text x="18" y="78.500">高质量组件</text></g></svg></div>

<div class="th" style="top:248px;left:674px"><svg width="167" height="103" viewBox="0 0 167 103" font-family="Liberation Sans,Noto Sans CJK SC,sans-serif"><rect width="167" height="103" fill="#2b60e8"/><path d="M48 72C58 50 95 32 133 10V103L122 94H80C60 92 46 84 48 72z" fill="#1a3ec0"/><use href="#fin" x="87" y="10" width="38" height="82"/><use href="#keypad" x="133" y="0" width="34" height="48"/><use href="#pay" x="133" y="54" width="34" height="50"/><text x="12" y="40" font-size="10.500" font-weight="700" fill="#fff">金融理财 APP</text><g fill="#fff"><circle cx="13" cy="51" r="1.500"/><circle cx="13" cy="60" r="1.500"/><circle cx="13" cy="68" r="1.500"/><circle cx="13" cy="77" r="1.500"/></g><g fill="#dbe4ff" font-size="3.800"><text x="18" y="52.500">全方式提升</text><text x="18" y="61.500">高保真交互</text><text x="18" y="69.500">海量素材库</text><text x="18" y="78.500">高质量组件</text></g></svg></div>

<div class="th" style="top:248px;left:851px"><svg width="167" height="103" viewBox="0 0 167 103" font-family="Liberation Sans,Noto Sans CJK SC,sans-serif"><rect width="167" height="103" fill="url(#gr)"/><path d="M60 103c10-30 40-60 72-70v70z" fill="#dc2045" opacity=".6"/><use href="#vid" x="84" y="10" width="38" height="82"/><use href="#vid2" x="132" y="0" width="35" height="48"/><use href="#prof" x="133" y="54" width="34" height="50"/><text x="12" y="40" font-size="10.500" font-weight="700" fill="#fff">短视频 APP</text><g fill="#fff"><circle cx="13" cy="51" r="1.500"/><circle cx="13" cy="60" r="1.500"/><circle cx="13" cy="68" r="1.500"/><circle cx="13" cy="77" r="1.500"/></g><g fill="#ffe0e6" font-size="3.800"><text x="18" y="52.500">全方式提升</text><text x="18" y="61.500">高保真交互</text><text x="18" y="69.500">海量素材库</text><text x="18" y="78.500">高质量组件</text></g></svg></div>

<span class="t n" style="left:328px;top:364.500px">电商</span>
<span class="t n" style="left:505px;top:364.500px">社交</span>
<span class="t n" style="left:682px;top:364.500px">金融理财</span>
<span class="t n" style="left:859px;top:364.500px">短视频</span>

<!-- mini -->
<span class="t h" style="left:320px;top:399px">小程序</span>
<div class="card" style="left:320px;top:412px;height:127px"></div>
<div class="card" style="left:497px;top:412px;height:127px"></div>
<div class="card" style="left:674px;top:412px;height:127px"></div>
<div class="card" style="left:851px;top:412px;height:127px"></div>

<div class="th" style="top:412px;left:320px"><svg width="167" height="103" viewBox="0 0 167 103" font-family="Liberation Sans,Noto Sans CJK SC,sans-serif"><rect width="167" height="103" fill="url(#gb)"/><use href="#shop2" x="83" y="13" width="37" height="79"/><use href="#ecom" x="124" y="-14" width="37" height="82"/><use href="#grid" x="124" y="72" width="37" height="50"/><text x="12" y="29" font-size="10.500" font-weight="700" fill="#fff">电子商务</text><text x="12" y="44" font-size="10.500" font-weight="700" fill="#fff">小程序</text><g fill="#fff"><circle cx="13" cy="56" r="1.500"/><circle cx="13" cy="64" r="1.500"/><circle cx="13" cy="73" r="1.500"/><circle cx="13" cy="81" r="1.500"/></g><g fill="#dbe4ff" font-size="3.800"><text x="18" y="57.500">全方式提升</text><text x="18" y="65.500">高保真交互</text><text x="18" y="74.500">海量素材库</text><text x="18" y="82.500">高质量组件</text></g></svg></div>

<div class="th" style="top:412px;left:497px"><svg width="167" height="103" viewBox="0 0 167 103" font-family="Liberation Sans,Noto Sans CJK SC,sans-serif"><rect width="167" height="103" fill="#2bbd68"/><circle cx="60" cy="70" r="58" fill="#31c872"/><use href="#chat" x="83" y="13" width="37" height="79"/><use href="#list" x="124" y="-14" width="37" height="82"/><use href="#chat" x="124" y="72" width="37" height="79"/><text x="12" y="29" font-size="10.500" font-weight="700" fill="#fff">社交聊天</text><text x="12" y="44" font-size="10.500" font-weight="700" fill="#fff">小程序</text><g fill="#fff"><circle cx="13" cy="56" r="1.500"/><circle cx="13" cy="64" r="1.500"/><circle cx="13" cy="73" r="1.500"/><circle cx="13" cy="81" r="1.500"/></g><g fill="#dcf7e6" font-size="3.800"><text x="18" y="57.500">全方式提升</text><text x="18" y="65.500">高保真交互</text><text x="18" y="74.500">海量素材库</text><text x="18" y="82.500">高质量组件</text></g></svg></div>

<div class="th" style="top:412px;left:674px"><svg width="167" height="103" viewBox="0 0 167 103" font-family="Liberation Sans,Noto Sans CJK SC,sans-serif"><rect width="167" height="103" fill="#2b60e8"/><path d="M56 78c0-22 30-36 56-50 18-9 36-12 55-12v87H100c-24 0-44-8-44-25z" fill="#1a3ec0"/><use href="#fin" x="83" y="13" width="37" height="79"/><use href="#fin2" x="124" y="-2" width="37" height="70"/><use href="#pay" x="124" y="72" width="37" height="50"/><text x="12" y="29" font-size="10.500" font-weight="700" fill="#fff">金融理财</text><text x="12" y="44" font-size="10.500" font-weight="700" fill="#fff">小程序</text><g fill="#fff"><circle cx="13" cy="56" r="1.500"/><circle cx="13" cy="64" r="1.500"/><circle cx="13" cy="73" r="1.500"/><circle cx="13" cy="81" r="1.500"/></g><g fill="#dbe4ff" font-size="3.800"><text x="18" y="57.500">全方式提升</text><text x="18" y="65.500">高保真交互</text><text x="18" y="74.500">海量素材库</text><text x="18" y="82.500">高质量组件</text></g></svg></div>

<div class="th" style="top:412px;left:851px"><svg width="167" height="103" viewBox="0 0 167 103" font-family="Liberation Sans,Noto Sans CJK SC,sans-serif"><rect width="167" height="103" fill="url(#gr)"/><path d="M60 103c10-30 40-60 107-70v70z" fill="#dc2045" opacity=".6"/><use href="#vid" x="83" y="13" width="37" height="79"/><use href="#cmt" x="124" y="0" width="37" height="68"/><use href="#vid3" x="124" y="72" width="37" height="31"/><text x="12" y="29" font-size="10.500" font-weight="700" fill="#fff">短视频</text><text x="12" y="44" font-size="10.500" font-weight="700" fill="#fff">小程序</text><g fill="#fff"><circle cx="13" cy="56" r="1.500"/><circle cx="13" cy="64" r="1.500"/><circle cx="13" cy="73" r="1.500"/><circle cx="13" cy="81" r="1.500"/></g><g fill="#ffe0e6" font-size="3.800"><text x="18" y="57.500">全方式提升</text><text x="18" y="65.500">高保真交互</text><text x="18" y="74.500">海量素材库</text><text x="18" y="82.500">高质量组件</text></g></svg></div>

<span class="t n" style="left:328px;top:528.500px">电商</span>
<span class="t n" style="left:505px;top:528.500px">社交</span>
<span class="t n" style="left:682px;top:528.500px">金融理财</span>
<span class="t n" style="left:859px;top:528.500px">短视频</span>

<!-- web -->
<span class="t h" style="left:320px;top:563px">网站页面</span>
<span class="t" style="left:978px;top:563px;font-size:9.200px;color:#aaa">查看全部</span>
<div class="a" style="left:320px;top:576px;width:167px;height:11px;background:#fff;border:1px solid #f1f2f4;border-bottom:0;border-radius:6px 6px 0 0;overflow:hidden"><div class="a" style="left:-1px;top:-1px;width:84px;height:12px;background:#2b55f5"></div><div class="a" style="left:125px;top:3px;width:20px;height:1px;background:#777"></div></div>
<div class="a" style="left:497px;top:576px;width:167px;height:11px;background:#fff;border:1px solid #f1f2f4;border-bottom:0;border-radius:6px 6px 0 0;overflow:hidden"><div class="a" style="left:-1px;top:-1px;width:84px;height:12px;background:#2b55f5"></div><div class="a" style="left:125px;top:3px;width:12px;height:1px;background:#777"></div></div>
<div class="a" style="left:674px;top:576px;width:167px;height:11px;background:#fff;border:1px solid #f1f2f4;border-bottom:0;border-radius:6px 6px 0 0;overflow:hidden"><div class="a" style="left:-1px;top:-1px;width:84px;height:12px;background:#14151f"></div><div class="a" style="left:125px;top:3px;width:20px;height:1px;background:#777"></div><div class="a" style="left:125px;top:7px;width:8px;height:4px;background:#333"></div></div>
<div class="a" style="left:851px;top:576px;width:167px;height:11px;background:#fff;border:1px solid #f1f2f4;border-bottom:0;border-radius:6px 6px 0 0;overflow:hidden"><div class="a" style="left:-1px;top:-1px;width:84px;height:12px;background:#2b55f5"></div><div class="a" style="left:125px;top:4px;width:18px;height:1px;background:#777"></div></div>

<div class="a" style="left:1155px;top:556px;width:25px;height:25px;background:#060608;border-radius:50%;color:#bbb;font-size:11px;line-height:25px;text-align:center">?</div>
</body></html>
